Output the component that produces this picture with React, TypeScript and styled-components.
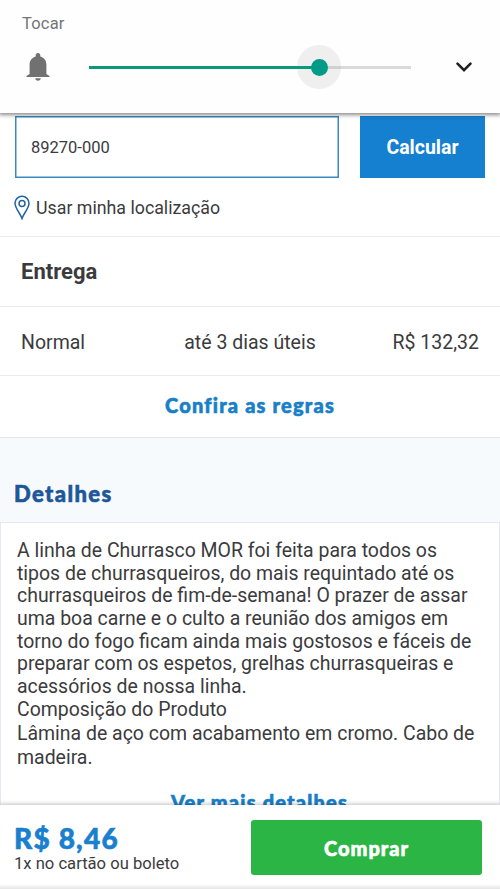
import React from "react";
import styled, { createGlobalStyle } from "styled-components";

const GlobalStyle = createGlobalStyle`
  * { box-sizing: border-box; }
  body { margin: 0; background: #fff; overflow: hidden; }
  button { border: 0; padding: 0; margin: 0; cursor: pointer; }
`;

const Screen = styled.div`
  height: 889px;
  width: 500px;
  display: flex;
  flex-direction: column;
  overflow: hidden;
  background: #fff;
  color: #3b3b3d;
  font-family: Roboto, "Liberation Sans", sans-serif;
`;

const VolumePanel = styled.header`
  flex: none;
  height: 113px;
  padding: 12px 0 0 22px;
  background: #fefefe;
  box-shadow: 0 1px 4px 1px rgba(0, 0, 0, 0.45);
  z-index: 2;
`;

const Phrase = styled.span<{ $size: number; $spacing?: number; $weight?: number }>`
  font-size: ${(p) => p.$size}px;
  letter-spacing: ${(p) => p.$spacing ?? 0}px;
  font-weight: ${(p) => p.$weight ?? 400};
  white-space: nowrap;
`;

const Brand = styled(Phrase)`
  font-family: Lato, "Open Sans", sans-serif;
  -webkit-text-stroke: 0.6px currentColor;
`;

const VolumeLabel = styled.div`
  height: 22px;
  line-height: 23px;
  color: #757575;
`;

const VolumeRow = styled.div`
  display: flex;
  align-items: center;
  height: 44px;
  margin-top: 11px;
`;

const BellIcon = styled.svg`
  width: 32px;
  height: 44px;
  flex: none;
`;

const Slider = styled.div`
  display: flex;
  align-items: center;
  width: 323px;
  margin-left: 35px;
`;

const Track = styled.div<{ $width: number; $color: string; $height: number }>`
  width: ${(p) => p.$width}px;
  height: ${(p) => p.$height}px;
  background: ${(p) => p.$color};
`;

const Thumb = styled.div`
  display: grid;
  place-items: center;
  width: 44px;
  height: 44px;
  border-radius: 50%;
  margin: 0 -22px;
  background:
    linear-gradient(#0b987c, #0b987c) 0 21px / 22px 3px no-repeat,
    linear-gradient(#d0d0d0, #d0d0d0) 22px 21px / 22px 3px no-repeat,
    #efefef;
  z-index: 1;
  &::after {
    content: "";
    width: 17px;
    height: 17px;
    border-radius: 50%;
    background: #019b88;
  }
`;

const Chevron = styled.svg`
  width: 18px;
  height: 12px;
  margin-left: 43px;
`;

const Page = styled.main`
  flex: 1;
  min-height: 0;
  overflow: hidden;
`;

const PostalForm = styled.div`
  display: flex;
  gap: 21px;
  padding: 3px 15px 0;
`;

const PostalField = styled.div`
  width: 324px;
  height: 62px;
  padding-left: 15px;
  line-height: 62px;
  border: 1px solid #3c89c1;
  box-shadow: inset 0 0 0 0.5px #3c89c1;
`;

const CalculateButton = styled.button`
  width: 125px;
  height: 62px;
  padding-top: 1px;
  color: #fff;
  background: #1580d0;
  font-family: inherit;
`;

const LocationLink = styled.div`
  display: flex;
  height: 58px;
  padding-left: 14px;
  line-height: 58px;
  align-items: center;
  & > span {
    padding-top: 1px;
  }
`;

const PinIcon = styled.svg`
  width: 16px;
  height: 25px;
  margin-right: 6px;
`;

const DeliveryRow = styled.div<{ $height: number }>`
  display: flex;
  align-items: center;
  justify-content: space-between;
  height: ${(p) => p.$height}px;
  padding: 0 21px;
  border-top: 1px solid #e7e9ea;
`;

const DeliveryOption = styled(DeliveryRow)`
  display: grid;
  grid-template-columns: 1fr auto 1fr;
  padding-top: 2px;
  & > :last-child {
    text-align: right;
  }
`;

const RulesLink = styled.div`
  height: 63px;
  text-align: center;
  line-height: 58px;
  border-top: 1px solid #e7e9ea;
  border-bottom: 1px solid #e5e8ea;
  color: #197fc8;
`;

const DetailsHeading = styled.h2`
  height: 84px;
  margin: 0;
  padding: 41px 0 0 14px;
  line-height: 30px;
  background: #f7fafc;
  color: #1e5799;
`;

const DetailsCard = styled.section`
  height: 300px;
  padding: 17px 15px 0 16px;
  border: 1px solid #e5e8ee;
`;

const Line = styled.div<{ $height?: number }>`
  height: ${(p) => p.$height ?? 22.7}px;
  line-height: ${(p) => p.$height ?? 22.7}px;
`;

const MoreLink = styled.div`
  margin-top: 19px;
  text-align: center;
  line-height: 26px;
  padding-left: 18px;
  color: #197fc8;
`;

const PurchaseBar = styled.footer`
  flex: none;
  display: flex;
  align-items: flex-start;
  justify-content: space-between;
  height: 84px;
  padding: 15px 18px 0 14px;
  background: linear-gradient(#fff 0 79px, #e5e5e5 84px);
  box-shadow: 0 -1px 4px rgba(0, 0, 0, 0.25);
  z-index: 2;
`;

const Price = styled.div`
  height: 34px;
  line-height: 37px;
  color: #197fce;
`;

const Installment = styled.div`
  line-height: 20px;
`;

const BuyButton = styled.button`
  width: 231px;
  height: 55px;
  border-radius: 3px;
  background: #2bb544;
  color: #fff;
`;

const description: { text: string; height?: number }[] = [
  { text: "A linha de Churrasco MOR foi feita para todos os" },
  { text: "tipos de churrasqueiros, do mais requintado até os" },
  { text: "churrasqueiros de fim-de-semana! O prazer de assar" },
  { text: "uma boa carne e o culto a reunião dos amigos em" },
  { text: "torno do fogo ficam ainda mais gostosos e fáceis de" },
  { text: "preparar com os espetos, grelhas churrasqueiras e" },
  { text: "acessórios de nossa linha." },
  { text: "Composição do Produto" },
  { text: "Lâmina de aço com acabamento em cromo. Cabo de", height: 24.4 },
  { text: "madeira.", height: 24.4 },
];

export default function App() {
  return (
    <Screen>
      <GlobalStyle />
      <VolumePanel>
        <VolumeLabel><Phrase $size={16.5} $spacing={0.2}>Tocar</Phrase></VolumeLabel>
        <VolumeRow>
          <BellIcon viewBox="0 0 32 44" fill="#717171">
            <path d="M16 8c-1.500 0-2.300 1-2.300 2.400v1C9.800 12.400 7.600 15.500 7.600 19.500v9.500L4.500 31v1h23v-1l-3.100-2v-9.500c0-4-2.200-7.100-6.100-8.100v-1C18.300 9 17.500 8 16 8zM13.200 33.200h5.600c-.2 1.500-1.200 2.500-2.800 2.500s-2.600-1-2.800-2.500z" />
          </BellIcon>
          <Slider>
            <Track $width={230} $height={3} $color="#0b987c" />
            <Thumb />
            <Track $width={92} $height={3} $color="#dadada" />
          </Slider>
          <Chevron viewBox="0 0 18 12" fill="none" stroke="#202020" strokeWidth="2.6" strokeLinecap="round">
            <path d="M2.500 2.700 9 9.200l6.500-6.500" />
          </Chevron>
        </VolumeRow>
      </VolumePanel>

      <Page>
        <PostalForm>
          <PostalField><Phrase $size={16.5}>89270-000</Phrase></PostalField>
          <CalculateButton><Phrase $size={19.5} $weight={700}>Calcular</Phrase></CalculateButton>
        </PostalForm>
        <LocationLink>
          <PinIcon viewBox="0 0 16 25" fill="none" stroke="#25659f" strokeWidth="1.5">
            <path d="M8 23.500C6.500 18.500 1 13.500 1 8.300a7 7 0 0 1 14 0c0 5.200-5.500 10.200-7 15.200z" />
            <circle cx="8" cy="8.500" r="3" />
          </PinIcon>
          <Phrase $size={17.8}>Usar minha localização</Phrase>
        </LocationLink>
        <DeliveryRow $height={70}><Phrase $size={22} $weight={700}>Entrega</Phrase></DeliveryRow>
        <DeliveryOption $height={69}>
          <Phrase $size={19.5}>Normal</Phrase>
          <Phrase $size={19.5}>até 3 dias úteis</Phrase>
          <Phrase $size={19.5}>R$ 132,32</Phrase>
        </DeliveryOption>
        <RulesLink><Brand $size={20} $weight={900} $spacing={1.2}>Confira as regras</Brand></RulesLink>
        <DetailsHeading><Brand $size={22} $weight={900} $spacing={1.4}>Detalhes</Brand></DetailsHeading>
        <DetailsCard>
          {description.map((line) => (
            <Line key={line.text} $height={line.height}>
              <Phrase $size={19.47}>{line.text}</Phrase>
            </Line>
          ))}
          <MoreLink><Brand $size={20} $weight={900} $spacing={1.2}>Ver mais detalhes</Brand></MoreLink>
        </DetailsCard>
      </Page>

      <PurchaseBar>
        <div>
          <Price><Brand $size={28} $weight={900} $spacing={1.2}>R$ 8,46</Brand></Price>
          <Installment><Phrase $size={16.6}>1x no cartão ou boleto</Phrase></Installment>
        </div>
        <BuyButton><Brand $size={20} $weight={900} $spacing={1}>Comprar</Brand></BuyButton>
      </PurchaseBar>
    </Screen>
  );
}
